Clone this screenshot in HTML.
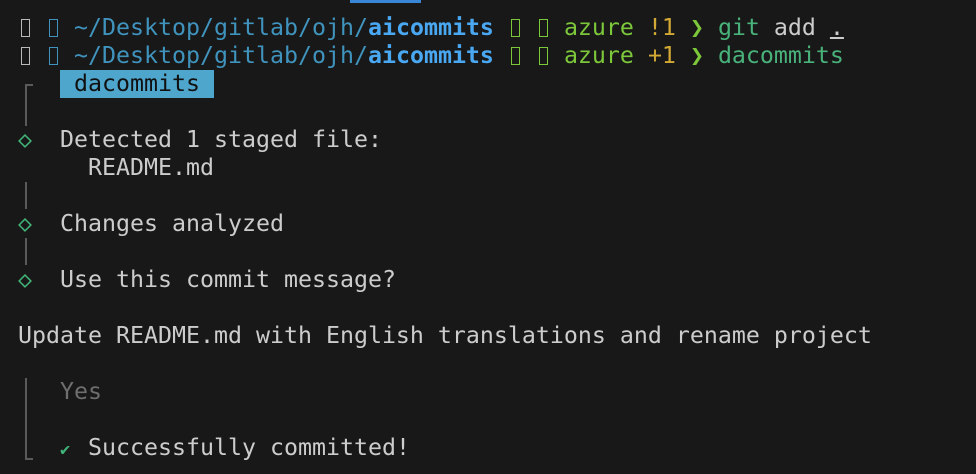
<!DOCTYPE html>
<html><head><meta charset="utf-8"><style>
html,body{margin:0;padding:0;background:#181818;width:976px;height:474px;overflow:hidden}
.t{position:absolute;left:18px;font-family:"DejaVu Sans Mono","Liberation Mono",monospace;font-size:23.25px;line-height:28px;white-space:pre;color:#cccccc}
.bx{display:inline-block;width:9px;height:18px;border:1.5px solid;box-sizing:border-box;vertical-align:-2px;margin:0 2px 0 3px}
.p{color:#3f93bd}.a{color:#4aa8f2;font-weight:bold}.g{color:#7cc73a}.y{color:#d2a935}.c{color:#49b27b}.d{color:#41b578}
.v{position:absolute;background:#5a5a5a;width:2px;left:25px}
.ck{display:inline-block;width:14px;font-size:17px;color:#41b578}
</style></head><body>
<div style="position:absolute;left:350px;top:0;width:71px;height:3px;background:#3a86d6"></div>
<div class="t" style="top:14px"><span class="bx" style="border-color:#bbb"></span> <span class="bx" style="border-color:#3f93bd"></span> <span class="p">~/Desktop/gitlab/ojh/</span><span class="a">aicommits</span> <span class="bx" style="border-color:#7cc73a"></span> <span class="bx" style="border-color:#7cc73a"></span> <span class="g">azure</span> <span class="y">!1</span> <span class="g">❯</span> <span class="c">git</span> add <span style="text-decoration:underline">.</span></div>
<div class="t" style="top:42px"><span class="bx" style="border-color:#bbb"></span> <span class="bx" style="border-color:#3f93bd"></span> <span class="p">~/Desktop/gitlab/ojh/</span><span class="a">aicommits</span> <span class="bx" style="border-color:#7cc73a"></span> <span class="bx" style="border-color:#7cc73a"></span> <span class="g">azure</span> <span class="y">+1</span> <span class="g">❯</span> <span class="c">dacommits</span></div>
<div style="position:absolute;left:60px;top:70px;width:154px;height:28px;background:#4ea6cc"></div>
<div class="t" style="top:70px;color:#111">   <span> dacommits </span></div>
<div class="v" style="top:84px;height:42px"></div>
<div style="position:absolute;left:25px;top:84px;width:8px;height:2px;background:#5a5a5a"></div>
<div class="t" style="top:126px"><span class="d">◇</span>  Detected 1 staged file:</div>
<div class="t" style="top:154px">     README.md</div>
<div class="v" style="top:182px;height:27px"></div>
<div class="t" style="top:210px"><span class="d">◇</span>  Changes analyzed</div>
<div class="v" style="top:238px;height:27px"></div>
<div class="t" style="top:266px"><span class="d">◇</span>  Use this commit message?</div>
<div class="t" style="top:322px">Update README.md with English translations and rename project</div>
<div class="v" style="top:378px;height:82px"></div>
<div style="position:absolute;left:25px;top:458px;width:8px;height:2px;background:#5a5a5a"></div>
<div class="t" style="top:378px;color:#6e6e6e">   Yes</div>
<div class="t" style="top:434px">   <span class="ck">✔</span> Successfully committed!</div>
</body></html>
